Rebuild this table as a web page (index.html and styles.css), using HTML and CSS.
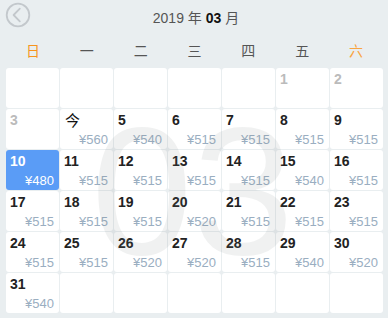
FILE: index.html
```html
<!DOCTYPE html>
<html lang="zh-CN">
<head>
<meta charset="utf-8">
<link rel="stylesheet" href="styles.css">
</head>
<body>
<div class="page">
  <header class="head">
    <button class="back" aria-label="back">
      <svg width="26" height="26" viewBox="0 0 26 26"><circle cx="13" cy="13" r="11.3" fill="none" stroke="#c3c8cc" stroke-width="1.8"/><path d="M14.8 6.6 L8.6 13 L14.8 19.4" fill="none" stroke="#c3c8cc" stroke-width="1.8" stroke-linecap="round" stroke-linejoin="round"/></svg>
    </button>
    <div class="title">2019 年 <b>03</b> 月</div>
  </header>
  <div class="weekdays">
    <span class="wk-end">日</span><span>一</span><span>二</span><span>三</span><span>四</span><span>五</span><span class="wk-sat">六</span>
  </div>
  <div class="board">
    <div class="grid">
      <div class="cell"></div><div class="cell"></div><div class="cell"></div><div class="cell"></div><div class="cell"></div>
      <div class="cell off"><span class="d">1</span></div>
      <div class="cell off"><span class="d">2</span></div>

      <div class="cell off"><span class="d">3</span></div>
      <div class="cell"><span class="d today">今</span><span class="p">¥560</span></div>
      <div class="cell"><span class="d">5</span><span class="p">¥540</span></div>
      <div class="cell"><span class="d">6</span><span class="p">¥515</span></div>
      <div class="cell"><span class="d">7</span><span class="p">¥515</span></div>
      <div class="cell"><span class="d">8</span><span class="p">¥515</span></div>
      <div class="cell"><span class="d">9</span><span class="p">¥515</span></div>

      <div class="cell sel"><span class="d">10</span><span class="p">¥480</span></div>
      <div class="cell"><span class="d">11</span><span class="p">¥515</span></div>
      <div class="cell"><span class="d">12</span><span class="p">¥515</span></div>
      <div class="cell"><span class="d">13</span><span class="p">¥515</span></div>
      <div class="cell"><span class="d">14</span><span class="p">¥515</span></div>
      <div class="cell"><span class="d">15</span><span class="p">¥540</span></div>
      <div class="cell"><span class="d">16</span><span class="p">¥515</span></div>

      <div class="cell"><span class="d">17</span><span class="p">¥515</span></div>
      <div class="cell"><span class="d">18</span><span class="p">¥515</span></div>
      <div class="cell"><span class="d">19</span><span class="p">¥515</span></div>
      <div class="cell"><span class="d">20</span><span class="p">¥520</span></div>
      <div class="cell"><span class="d">21</span><span class="p">¥515</span></div>
      <div class="cell"><span class="d">22</span><span class="p">¥515</span></div>
      <div class="cell"><span class="d">23</span><span class="p">¥515</span></div>

      <div class="cell"><span class="d">24</span><span class="p">¥515</span></div>
      <div class="cell"><span class="d">25</span><span class="p">¥515</span></div>
      <div class="cell"><span class="d">26</span><span class="p">¥520</span></div>
      <div class="cell"><span class="d">27</span><span class="p">¥520</span></div>
      <div class="cell"><span class="d">28</span><span class="p">¥515</span></div>
      <div class="cell"><span class="d">29</span><span class="p">¥540</span></div>
      <div class="cell"><span class="d">30</span><span class="p">¥520</span></div>

      <div class="cell"><span class="d">31</span><span class="p">¥540</span></div>
      <div class="cell"></div><div class="cell"></div><div class="cell"></div><div class="cell"></div><div class="cell"></div><div class="cell"></div>
    </div>
    <div class="mark">03</div>
  </div>
</div>
</body>
</html>
```
FILE: styles.css
```css
html, body {
  margin: 0;
  padding: 0;
}
body {
  background: #e9eef0;
  font-family: "Liberation Sans", "Noto Sans CJK SC", sans-serif;
  width: 388px;
  height: 318px;
  overflow: hidden;
}
.page {
  padding: 0 5px 0 6px;
}
.head {
  height: 34px;
  display: grid;
  grid-template-columns: 1fr auto 1fr;
  align-items: center;
  margin: 0 -5px 0 -6px;
}
.back {
  justify-self: start;
  align-self: start;
  margin: 2px 0 0 5px;
  padding: 0;
  border: 0;
  background: none;
  width: 26px;
  height: 26px;
  display: block;
}
.back svg { display: block; }
.title {
  font-size: 14px;
  color: #555;
  padding-left: 4px;
}
.title b {
  color: #111;
  font-weight: bold;
}
.weekdays {
  display: grid;
  grid-template-columns: repeat(7, 1fr);
  height: 32px;
  margin-bottom: 2px;
  align-items: center;
  font-size: 14px;
  color: #555;
  text-align: center;
  font-family: "Noto Sans CJK SC", sans-serif;
}
.weekdays span { line-height: 20px; }
.wk-end { color: #f7941d; }
.wk-sat { color: #f9a440; }
.board {
  position: relative;
}
.grid {
  display: grid;
  grid-template-columns: repeat(7, 1fr);
  grid-auto-rows: 40px;
  gap: 1px;
}
.cell {
  background: #fff;
  border-radius: 3px;
  display: flex;
  flex-direction: column;
  justify-content: space-between;
  padding: 3px 5px 2px 4px;
  box-sizing: border-box;
}
.d {
  font-size: 14px;
  line-height: 16px;
  font-weight: bold;
  color: #222;
}
.d.today {
  font-family: "Noto Sans CJK SC", sans-serif;
  font-weight: normal;
  font-size: 15px;
  line-height: 16px;
  color: #111;
  margin-left: 1px;
}
.off .d { color: #bbb; }
.p {
  font-size: 13px;
  line-height: 15px;
  color: #9aaec1;
  text-align: right;
}
.sel {
  background: #5a9cf6;
}
.sel .d, .sel .p { color: #fff; }
.mark {
  position: absolute;
  left: 0;
  right: 0;
  top: 50%;
  transform: translateY(-50%);
  text-align: center;
  font-size: 182px;
  line-height: 1;
  color: rgba(120, 125, 130, 0.11);
  pointer-events: none;
  padding-right: 4px;
}
```
